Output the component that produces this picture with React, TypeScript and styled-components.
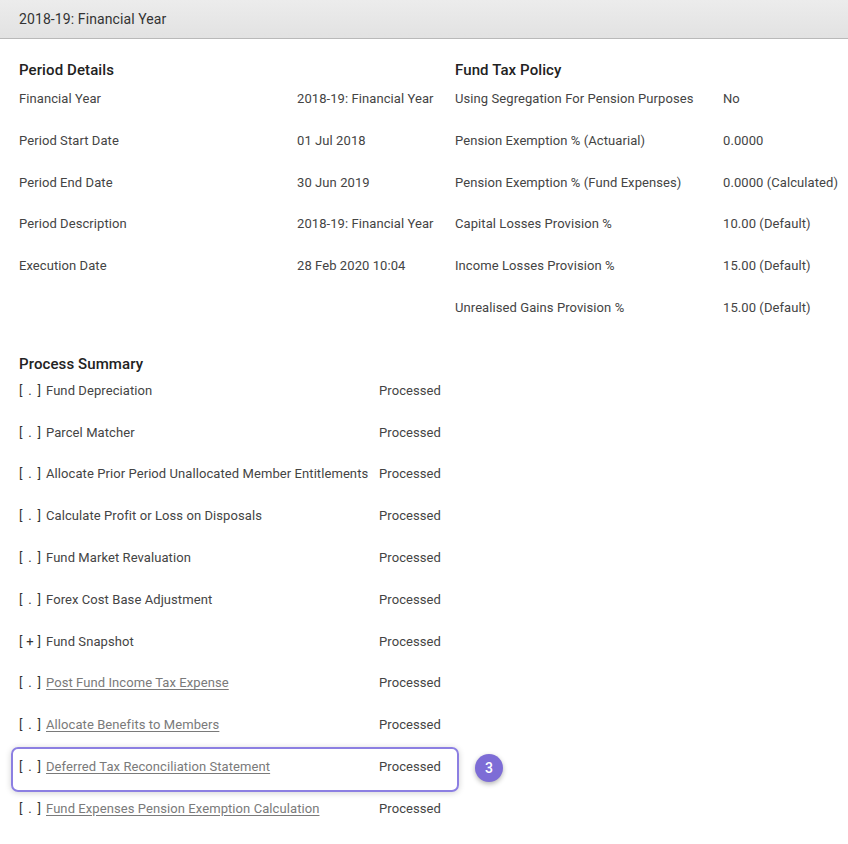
import styled, { createGlobalStyle } from 'styled-components';

const GlobalStyle = createGlobalStyle`
  html, body {
    margin: 0;
    padding: 0;
    background: #ffffff;
  }
  body {
    font-family: Roboto, "Liberation Sans", Arial, sans-serif;
    color: #444444;
    -webkit-font-smoothing: antialiased;
  }
`;

const Page = styled.div`
  width: 848px;
  min-height: 844px;
  background: #ffffff;
`;

const Header = styled.div`
  height: 38px;
  display: flex;
  align-items: center;
  padding: 0 19px;
  background: linear-gradient(#ececec, #e2e2e2);
  border-bottom: 1px solid #b9b9b9;
  font-size: 14px;
  letter-spacing: 0.1px;
  color: #333333;
`;

const Content = styled.div`
  padding: 22px 0 0 19px;
`;

const TopGrid = styled.div`
  display: grid;
  grid-template-columns: 436px 1fr;
`;

const Section = styled.div`
  display: flex;
  flex-direction: column;
`;

const SectionTitle = styled.div`
  font-size: 15px;
  font-weight: 500;
  line-height: 18px;
  letter-spacing: 0.1px;
  color: #222222;
`;

const Row = styled.div<{ $labelWidth: number }>`
  position: relative;
  display: grid;
  grid-template-columns: ${(p) => p.$labelWidth}px 1fr;
  height: 41.8px;
  padding-top: 10px;
  box-sizing: border-box;
  font-size: 13px;
  line-height: 20px;
  letter-spacing: 0.08px;
  white-space: nowrap;
`;

const Label = styled.span`
  color: #444444;
`;

const Value = styled.span`
  color: #444444;
`;

const ProcessList = styled.div`
  width: 432px;
  margin-top: 25px;
  display: flex;
  flex-direction: column;
`;

const ProcessRows = styled.div`
  margin-top: -2px;
  display: flex;
  flex-direction: column;
`;

const Marker = styled.span`
  display: inline-flex;
  justify-content: space-between;
  width: 22px;
  margin-right: 5px;
  color: #333333;
`;

const Link = styled.a`
  color: #7a7a7a;
  text-decoration: underline;
  text-underline-offset: 2px;
  cursor: pointer;
`;

const Highlight = styled.div`
  position: absolute;
  left: -8px;
  right: -8px;
  top: 0;
  bottom: -3px;
  border: 2px solid #8c7fe2;
  border-radius: 7px;
  box-shadow: 0 1px 6px rgba(0, 0, 0, 0.18);
  pointer-events: none;
`;

const StepBadge = styled.div`
  position: absolute;
  left: 456px;
  top: 7px;
  width: 28px;
  height: 28px;
  border-radius: 50%;
  background: #7d6cd6;
  box-shadow: 0 2px 5px rgba(0, 0, 0, 0.3);
  color: #ffffff;
  font-size: 14px;
  font-weight: 500;
  display: flex;
  align-items: center;
  justify-content: center;
`;

const periodDetails = [
  ['Financial Year', '2018-19: Financial Year'],
  ['Period Start Date', '01 Jul 2018'],
  ['Period End Date', '30 Jun 2019'],
  ['Period Description', '2018-19: Financial Year'],
  ['Execution Date', '28 Feb 2020 10:04'],
];

const taxPolicy = [
  ['Using Segregation For Pension Purposes', 'No'],
  ['Pension Exemption % (Actuarial)', '0.0000'],
  ['Pension Exemption % (Fund Expenses)', '0.0000 (Calculated)'],
  ['Capital Losses Provision %', '10.00 (Default)'],
  ['Income Losses Provision %', '15.00 (Default)'],
  ['Unrealised Gains Provision %', '15.00 (Default)'],
];

interface ProcessItem {
  name: string;
  marker: string;
  link?: boolean;
  step?: number;
}

const processes: ProcessItem[] = [
  { name: 'Fund Depreciation', marker: '.' },
  { name: 'Parcel Matcher', marker: '.' },
  { name: 'Allocate Prior Period Unallocated Member Entitlements', marker: '.' },
  { name: 'Calculate Profit or Loss on Disposals', marker: '.' },
  { name: 'Fund Market Revaluation', marker: '.' },
  { name: 'Forex Cost Base Adjustment', marker: '.' },
  { name: 'Fund Snapshot', marker: '+' },
  { name: 'Post Fund Income Tax Expense', marker: '.', link: true },
  { name: 'Allocate Benefits to Members', marker: '.', link: true },
  { name: 'Deferred Tax Reconciliation Statement', marker: '.', link: true, step: 3 },
  { name: 'Fund Expenses Pension Exemption Calculation', marker: '.', link: true },
];

export default function App() {
  return (
    <Page>
      <GlobalStyle />
      <Header>2018-19: Financial Year</Header>
      <Content>
        <TopGrid>
          <Section>
            <SectionTitle>Period Details</SectionTitle>
            {periodDetails.map(([label, value]) => (
              <Row key={label} $labelWidth={278}>
                <Label>{label}</Label>
                <Value>{value}</Value>
              </Row>
            ))}
          </Section>
          <Section>
            <SectionTitle>Fund Tax Policy</SectionTitle>
            {taxPolicy.map(([label, value]) => (
              <Row key={label} $labelWidth={268}>
                <Label>{label}</Label>
                <Value>{value}</Value>
              </Row>
            ))}
          </Section>
        </TopGrid>

        <ProcessList>
          <SectionTitle>Process Summary</SectionTitle>
          <ProcessRows>
            {processes.map((p) => (
              <Row key={p.name} $labelWidth={360}>
                <Label>
                  <Marker>
                    <span>[</span>
                    <span>{p.marker}</span>
                    <span>]</span>
                  </Marker>
                  {p.link ? <Link>{p.name}</Link> : p.name}
                </Label>
                <Value>Processed</Value>
                {p.step && (
                  <>
                    <Highlight />
                    <StepBadge>{p.step}</StepBadge>
                  </>
                )}
              </Row>
            ))}
          </ProcessRows>
        </ProcessList>
      </Content>
    </Page>
  );
}
